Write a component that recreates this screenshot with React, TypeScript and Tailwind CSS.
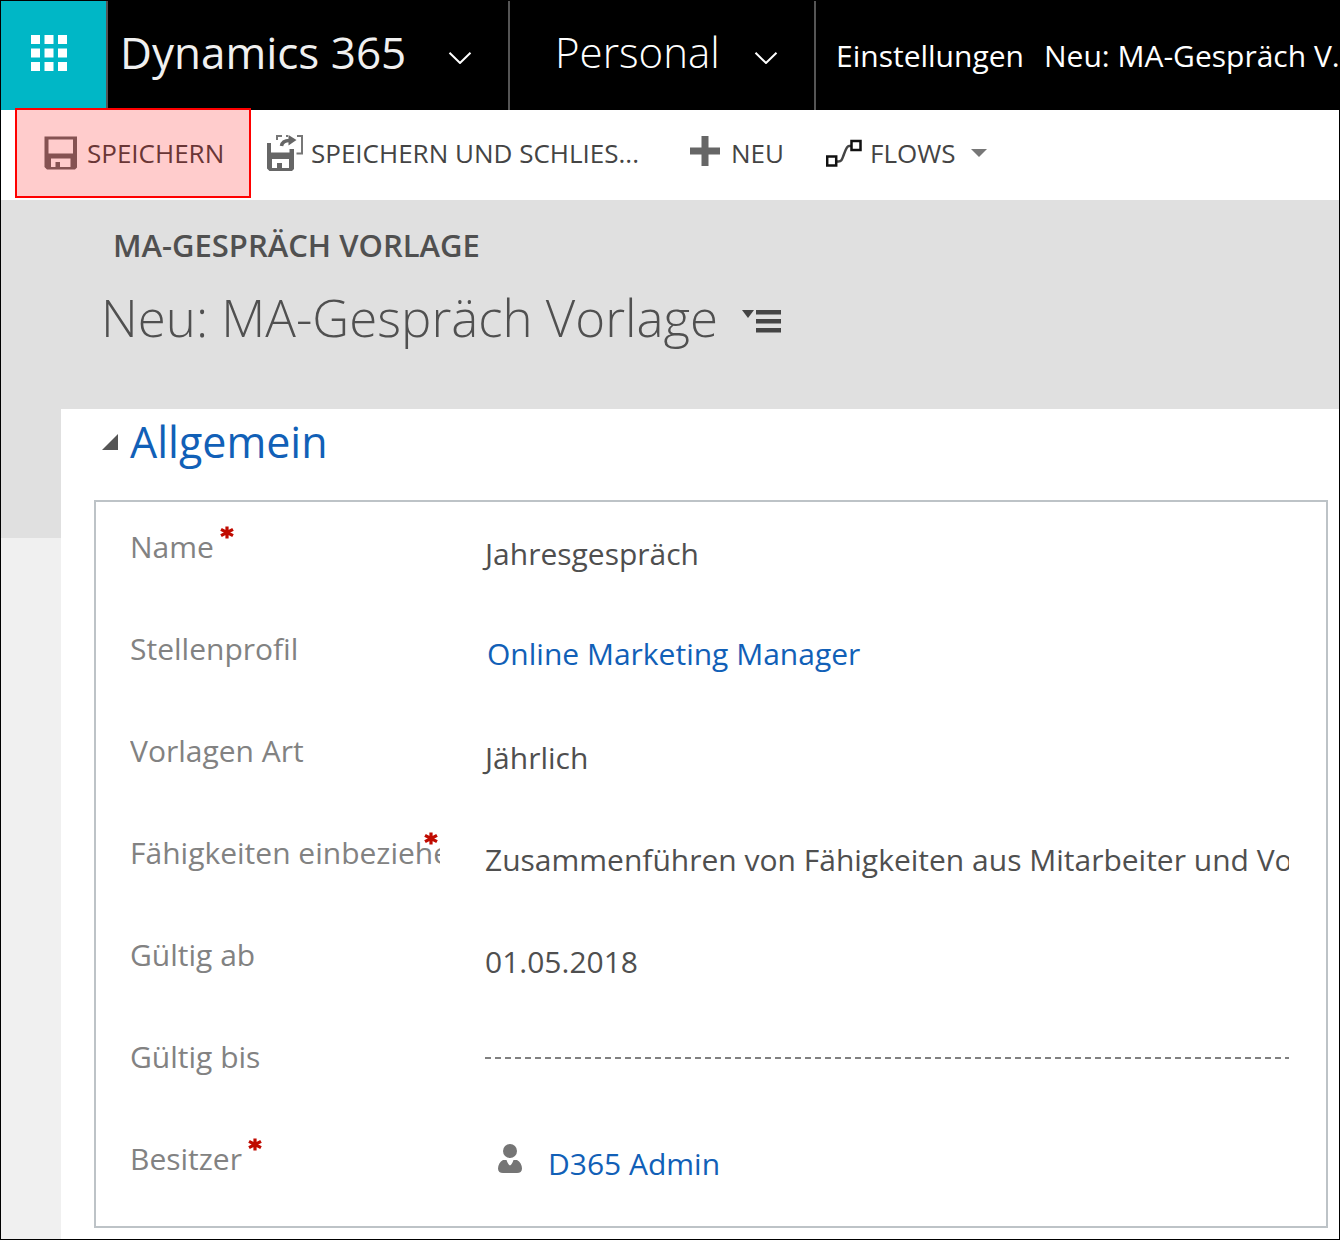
import React from 'react';

const Chevron = () => (
  <svg className="mt-1 h-3 w-6 shrink-0" viewBox="0 0 24 12" fill="none" stroke="#fff" strokeWidth="2">
    <path d="M1.5 0.8 L12 11 L22.5 0.8" />
  </svg>
);

const SaveIcon = () => (
  <svg className="h-9 w-9 shrink-0" viewBox="0 0 36 36">
    <path
      fill="#666"
      fillRule="evenodd"
      d="M1.500 1.500h32.500v31l-2 2H4L1.500 32zM5.500 4.500v14h24.500v-14zM8 23.500v8.500h4.500v-5h4.500v5h10.500v-8.500z"
    />
  </svg>
);

const SaveCloseIcon = () => (
  <svg className="h-9 w-9 shrink-0" viewBox="0 0 36 36">
    <path
      fill="#666"
      fillRule="evenodd"
      d="M0 8h4v9.500h18.500V14H27v20l-2 2H2.500L0 33.500zM5 24v9h5v-5h5v5h7v-9z"
    />
    <path d="M10 5V1H15M19 1h2M30 1h5v17.500H29.500" fill="none" stroke="#777" strokeWidth="2" />
    <path d="M14.500 11c0.500-3.500 3-5.500 8-5.500" fill="none" stroke="#666" strokeWidth="3.500" />
    <path d="M21.500 0l8 5-8 5.500z" fill="#666" />
  </svg>
);

const PlusIcon = () => (
  <svg className="h-9 w-9 shrink-0" viewBox="0 0 36 36">
    <path d="M14.500 1h7v11.500H33v7H21.500V31h-7V19.500H3v-7h11.500z" fill="#666" />
  </svg>
);

const FlowIcon = () => (
  <svg className="h-9 w-9 shrink-0" viewBox="0 0 36 36" fill="none">
    <path d="M10 26.500h2.500c3 0 3.500-2 5-6s3-9.500 5.500-9.500H26" stroke="#444" strokeWidth="2.500" />
    <rect x="1.200" y="21.500" width="9" height="9" fill="#fff" stroke="#111" strokeWidth="2.500" />
    <rect x="25.500" y="6" width="9" height="9" fill="#fff" stroke="#111" strokeWidth="2.500" />
  </svg>
);

const PersonIcon = () => (
  <svg className="mb-2.5 h-8 w-6 shrink-0" viewBox="0 0 24 32" fill="#757575">
    <circle cx="12" cy="8" r="7" />
    <path d="M5 17h3.500c1 3 2 4.500 3.500 5.500 1.500-1 2.500-2.500 3.500-5.500H19c3 1.500 5 5 5 8.500 0 3-2 4.500-5 4.500H5c-3 0-5-1.500-5-4.500C0 22 2 18.500 5 17z" />
  </svg>
);

const RequiredMark = () => (
  <svg className="absolute right-0.5 top-0" width="14" height="14" viewBox="0 0 14 14">
    <path d="M7 0.500v12M1 3.300l12 6.400M13 3.300l-12 6.400" stroke="#c00b00" strokeWidth="3.200" />
  </svg>
);

const Row: React.FC<{
  id: string;
  label: string;
  required?: boolean;
  children: React.ReactNode;
}> = ({ id, label, required, children }) => (
  <div className="grid h-[102px] grid-cols-[310px_minmax(0,1fr)] gap-x-[45px] pt-6">
    <div className="relative h-fit w-fit max-w-full">
      <label htmlFor={id} className="block overflow-hidden whitespace-nowrap pr-[22px] leading-[42px] text-[#828282]">
        {label}
      </label>
      {required && <RequiredMark />}
    </div>
    {children}
  </div>
);

// margin and indent cancel out, so the overhang of a leading "J" is not clipped
const valueClass =
  '-ml-1 mt-2 block h-10 w-[calc(100%+4px)] appearance-none overflow-hidden bg-transparent p-0 indent-1 leading-10 text-[#4f4f4f] outline-none';

const commandClass = 'relative flex h-[90px] items-center whitespace-nowrap pb-1';

export default function App() {
  return (
    <div className="flex min-h-screen flex-col overflow-hidden border border-black bg-white font-['Open_Sans',sans-serif] text-[30px]">

      {/* NAV BAR */}
      <header className="flex h-[109px] shrink-0 items-stretch overflow-hidden whitespace-nowrap bg-black text-white">
        <button aria-label="Apps" className="flex w-[107px] shrink-0 items-center border-r-2 border-[#555] bg-[#00b7c6] pb-1.5 pl-[30px]">
          <svg className="h-9 w-9" viewBox="0 0 36 36" fill="#fff">
            {[0, 13.5, 27].map((y) =>
              [0, 13.5, 27].map((x) => <rect key={`${x}-${y}`} x={x} y={y} width="9" height="9" />)
            )}
          </svg>
        </button>
        <button className="flex w-[402px] shrink-0 items-center justify-between border-r-2 border-[#555] pl-3 pr-9">
          <span className="pb-2 text-[44px] leading-[60px] text-[#f0f0f0]">Dynamics 365</span>
          <Chevron />
        </button>
        <button className="flex w-[306px] shrink-0 items-center justify-between border-r-2 border-[#555] pl-[45px] pr-9">
          <span className="pb-2 text-[42px] font-light leading-[60px]">Personal</span>
          <Chevron />
        </button>
        <nav className="flex items-center gap-5 pl-5">
          <a href="#einstellungen">Einstellungen</a>
          <a href="#neu">Neu: MA-Gespräch V...</a>
        </nav>
      </header>

      {/* COMMANDS */}
      <div className="flex h-[90px] shrink-0 items-center pl-[14px] text-[26px] text-[#444]">
        <button className={`${commandClass} w-[236px] gap-2 pl-7`}>
          <SaveIcon />
          SPEICHERN
          <span className="absolute -top-0.5 bottom-0.5 left-0 right-0 border-2 border-[#ff0000] bg-[#ff0000]/20" />
        </button>
        <button className={`${commandClass} w-[422px] gap-2 pl-4`}>
          <SaveCloseIcon />
          SPEICHERN UND SCHLIES...
        </button>
        <button className={`${commandClass} w-[153px] gap-2 pl-3.5`}>
          <PlusIcon />
          NEU
        </button>
        <button className={`${commandClass} gap-2`}>
          <FlowIcon />
          FLOWS
          <svg className="ml-2 h-2 w-4" viewBox="0 0 16 8" fill="#777">
            <path d="M0 0h16L8 8z" />
          </svg>
        </button>
      </div>

      <main className="flex grow flex-col bg-[linear-gradient(#e0e0e0_338px,#f0f0f0_338px)]">

        {/* TITLE */}
        <div className="h-[209px] pl-[100px] pt-6 text-[#505050]">
          <p className="pl-3 text-[31px] font-semibold leading-[42px]">MA-GESPRÄCH VORLAGE</p>
          <div className="mt-4 flex items-center gap-6">
            <h1 className="text-[51px] font-light leading-[70px]">Neu: MA-Gespräch Vorlage</h1>
            <button aria-label="Formular wechseln" className="pt-2">
              <svg className="h-6 w-10" viewBox="0 0 40 24" fill="#444">
                <path d="M0 1h12L6 9zM14 1h25v4.500H14zM14 10h25v4.500H14zM14 19h25v4.500H14z" />
              </svg>
            </button>
          </div>
        </div>

        {/* FORM */}
        <div className="ml-[60px] grow bg-white pl-[33px] pr-[11px] pb-[11px]">
          <h2 className="flex h-[91px] items-start pl-2 pt-0.5 text-[43px] leading-[62px] text-[#1160b7]">
            <button className="flex items-center gap-3">
              <svg className="h-4 w-4" viewBox="0 0 16 16" fill="#555">
                <path d="M16 0v16H0z" />
              </svg>
              Allgemein
            </button>
          </h2>

          <form className="border-2 border-[#bdc3c7] pb-[10px] pl-[34px] pr-[37px]">
            <Row id="name" label="Name" required>
              <input id="name" className={valueClass} defaultValue="Jahresgespräch" />
            </Row>
            <Row id="stellenprofil" label="Stellenprofil">
              <a id="stellenprofil" href="#stellenprofil" className="mt-1.5 h-10 w-fit pl-0.5 leading-10 text-[#1160b7]">
                Online Marketing Manager
              </a>
            </Row>
            <Row id="art" label="Vorlagen Art">
              <select id="art" className={valueClass}>
                <option>Jährlich</option>
              </select>
            </Row>
            <Row id="faehigkeiten" label="Fähigkeiten einbeziehen" required>
              <select id="faehigkeiten" className={valueClass}>
                <option>Zusammenführen von Fähigkeiten aus Mitarbeiter und Vorlage</option>
              </select>
            </Row>
            <Row id="ab" label="Gültig ab">
              <input id="ab" className={valueClass} defaultValue="01.05.2018" />
            </Row>
            <Row id="bis" label="Gültig bis">
              <input
                id="bis"
                className="block h-[23px] w-full bg-[repeating-linear-gradient(90deg,#808080_0_6px,transparent_6px_10px)] bg-[length:100%_2px] bg-bottom bg-no-repeat outline-none"
              />
            </Row>
            <Row id="besitzer" label="Besitzer" required>
              <div className="mt-1.5 flex h-10 items-center gap-[26px] pl-[13px]">
                <PersonIcon />
                <a id="besitzer" href="#besitzer" className="leading-10 text-[#1160b7]">D365 Admin</a>
              </div>
            </Row>
          </form>
        </div>
      </main>
    </div>
  );
}
